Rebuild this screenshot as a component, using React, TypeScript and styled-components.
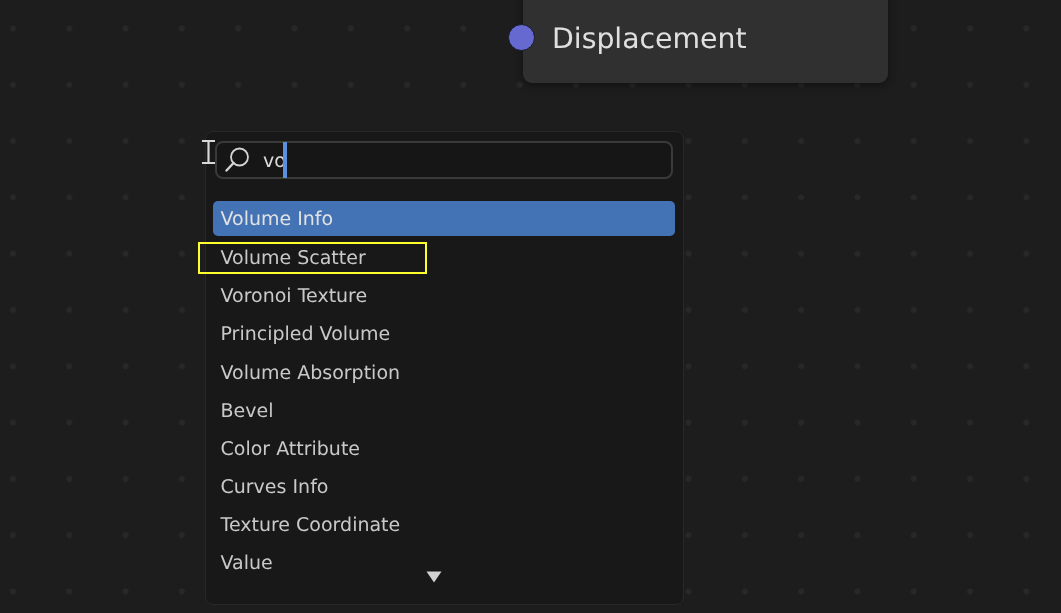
import styled, {createGlobalStyle} from 'styled-components'

const Global = createGlobalStyle`
    html, body {
        margin: 0;
        padding: 0;
        background: #1d1d1d;
    }
`

const Canvas = styled.div`
    position: relative;
    width: 1061px;
    height: 613px;
    overflow: hidden;
    background-color: #1d1d1d;
    background-image: radial-gradient(circle, #282828 2.6px, transparent 3.4px);
    background-size: 56.3px 56.3px;
    background-position: -15.15px 0.35px;
    font-family: "DejaVu Sans", sans-serif;
    text-rendering: geometricPrecision;
    filter: blur(0.35px);
`

const Node = styled.div`
    position: absolute;
    left: 523px;
    top: -40px;
    width: 365px;
    height: 123px;
    box-sizing: border-box;
    padding: 0 0 26px 29px;
    display: flex;
    align-items: flex-end;
    background: #303030;
    border-radius: 9px;
    box-shadow: 0 2px 8px rgba(0, 0, 0, 0.45);
`

const NodeLabel = styled.span`
    font-size: 28.3px;
    line-height: 36px;
    color: #e0e0e0;
`

const Socket = styled.span`
    position: absolute;
    left: -15px;
    top: 64px;
    width: 27px;
    height: 27px;
    box-sizing: border-box;
    border-radius: 50%;
    background: #6669d0;
    border: 1.5px solid #191922;
`

const Menu = styled.div`
    position: absolute;
    left: 205px;
    top: 131px;
    width: 479px;
    height: 474px;
    box-sizing: border-box;
    padding: 9px 8px 0 7px;
    display: flex;
    flex-direction: column;
    background: #181818;
    border: 1px solid #282828;
    border-radius: 8px;
`

const SearchBox = styled.div`
    height: 38px;
    margin: 0 2px 0 2px;
    box-sizing: border-box;
    padding-left: 7px;
    display: flex;
    align-items: center;
    background: #161616;
    border: 2px solid #3a3a3a;
    border-radius: 8px;
`

const SearchText = styled.span`
    margin-left: 11px;
    font-size: 19px;
    line-height: 34px;
    padding-top: 2px;
    color: #dcdcdc;
`

const Caret = styled.span`
    width: 4px;
    height: 36px;
    margin-left: -3px;
    background: #5b8fe0;
`

const List = styled.div`
    margin-top: 22px;
    display: flex;
    flex-direction: column;
`

const Row = styled.div<{$active?: boolean}>`
    height: 38.15px;
    display: flex;
    align-items: center;
    box-sizing: border-box;
    padding: 0 0 0 7.5px;
    font-size: 19px;
    color: ${p => p.$active ? '#e2e2e2' : '#c9c9c9'};
    background: ${p => p.$active ? '#4372b5' : 'transparent'};
    border-radius: 5px;
    ${p => p.$active && 'height: 35px; margin-bottom: 3.15px;'}
`

const Arrow = styled.svg`
    position: absolute;
    left: 220px;
    top: 439px;
`

const Highlight = styled.div`
    position: absolute;
    left: 198px;
    top: 242px;
    width: 229px;
    height: 32px;
    box-sizing: border-box;
    border: 2px solid #ffff2e;
`

const Cursor = styled.svg`
    position: absolute;
    left: 201px;
    top: 139px;
`

const items = [
    'Volume Info',
    'Volume Scatter',
    'Voronoi Texture',
    'Principled Volume',
    'Volume Absorption',
    'Bevel',
    'Color Attribute',
    'Curves Info',
    'Texture Coordinate',
    'Value',
]

export default function App() {
    return (
        <Canvas>
            <Global/>
            <Node>
                <Socket/>
                <NodeLabel>Displacement</NodeLabel>
            </Node>
            <Menu>
                <SearchBox>
                    <svg width="28" height="28" viewBox="0 0 28 28" fill="none" stroke="#d4d4d4">
                        <circle cx="15.5" cy="11" r="8.5" strokeWidth="1.8"/>
                        <path d="M9.5 17 L2.5 24.5" strokeWidth="2.4" strokeLinecap="round"/>
                    </svg>
                    <SearchText>vo</SearchText>
                    <Caret/>
                </SearchBox>
                <List>
                    {items.map((item, i) => <Row key={item} $active={i === 0}>{item}</Row>)}
                </List>
                <Arrow width="16" height="12" viewBox="0 0 16 12">
                    <path d="M0.5 0.5 H15.5 L8 11.5 Z" fill="#d2d2d2"/>
                </Arrow>
            </Menu>
            <Highlight/>
            <Cursor width="16" height="28" viewBox="0 0 16 28" fill="none" stroke="#d8d8d8" strokeWidth="2.2">
                <path d="M1 2 H14 M7.5 2 V24 M1 24 H14"/>
            </Cursor>
        </Canvas>
    )
}
